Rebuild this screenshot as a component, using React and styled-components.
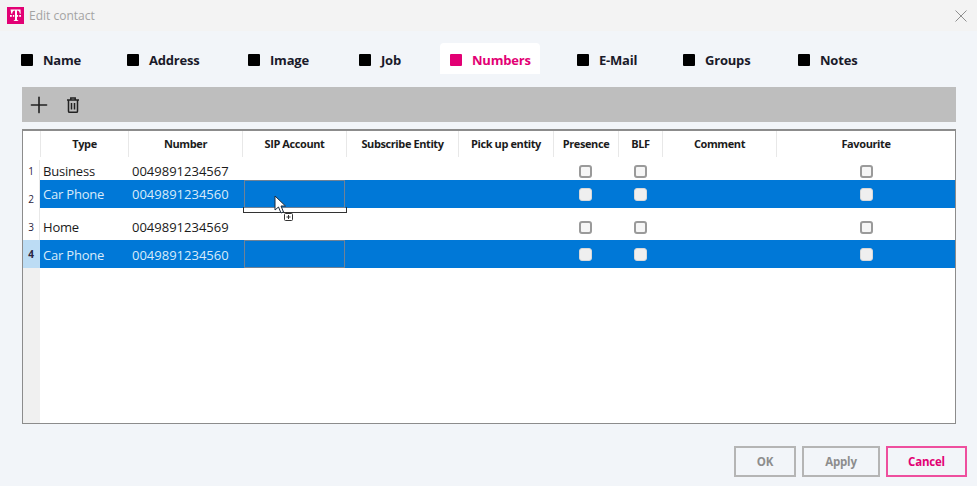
import React from 'react';
import styled, { createGlobalStyle } from 'styled-components';
import { Plus } from 'lucide-react';

const MAGENTA = '#e20074';
const COLUMNS = '17px 88px 114px 104px 112px 95px 65px 44px 114px 1fr';
const HEADER_COLUMNS = '18px 88px 114px 104px 112px 95px 65px 44px 114px 1fr';

const GlobalStyle = createGlobalStyle`
  html, body { margin: 0; padding: 0; }
  body { background: #f2f5f9; font-family: "Open Sans", "Noto Sans", sans-serif; }
`;

const Dialog = styled.div`
  width: 977px;
  height: 486px;
  display: flex;
  flex-direction: column;
  overflow: hidden;
  background: #f2f5f9;
`;

const TitleBar = styled.div`
  height: 31px;
  flex: none;
  display: flex;
  align-items: center;
  padding: 0 9px 0 7px;
  background: #f3f3f3;
`;

const Logo = styled.div`
  width: 17px;
  height: 17px;
  background: ${MAGENTA};
  display: flex;
`;

const TitleText = styled.span`
  margin-left: 5px;
  font-size: 12px;
  color: #a3a3a3;
`;

const CloseButton = styled.div`
  margin-left: auto;
  display: flex;
`;

const Tabs = styled.div`
  display: flex;
  height: 31px;
  margin-top: 12px;
  padding-left: 21px;
  flex: none;
`;

const Tab = styled.div`
  width: ${p => p.$w}px;
  display: flex;
  align-items: center;
  gap: 10px;
  padding: 3px 0 0 ${p => p.$pl || 0}px;
  box-sizing: border-box;
  font-size: 13px;
  font-weight: 700;
  letter-spacing: -0.2px;
  color: ${p => (p.$active ? MAGENTA : '#1a1a2a')};
  background: ${p => (p.$active ? '#fff' : 'transparent')};
  border-radius: ${p => (p.$active ? '4px 4px 0 0' : '0')};
`;

const TabMark = styled.span`
  width: 12px;
  height: 12px;
  flex: none;
  border-radius: 1px;
  background: ${p => (p.$active ? MAGENTA : '#000')};
`;

const Content = styled.div`
  margin: 13px 21px 0 22px;
  display: flex;
  flex-direction: column;
  gap: 7px;
`;

const Toolbar = styled.div`
  height: 35px;
  background: #bebebe;
  display: flex;
  align-items: center;
  gap: 14px;
  padding-left: 4px;
  color: #222;
`;

const Table = styled.div`
  position: relative;
  height: 292px;
  border: 1px solid #8c8c8c;
  border-top-width: 2px;
  background: #fff;
  display: flex;
  flex-direction: column;
`;

const HeaderRow = styled.div`
  display: grid;
  grid-template-columns: ${HEADER_COLUMNS};
  height: 29px;
`;

const HeaderCell = styled.div`
  display: flex;
  align-items: center;
  justify-content: center;
  margin-bottom: 3px;
  padding-bottom: 1px;
  font-size: 11px;
  font-weight: 700;
  letter-spacing: -0.4px;
  color: #1c1c1c;
  border-right: 1px solid #e8e8e8;
  &:last-child { border-right: none; }
`;

const Row = styled.div`
  display: grid;
  grid-template-columns: ${COLUMNS};
  height: ${p => p.$h}px;
  background: ${p => (p.$selected ? '#0078d7' : '#fff')};
`;

const RowNumber = styled.div`
  display: flex;
  align-items: center;
  justify-content: center;
  padding-top: ${p => p.$top || 0}px;
  box-sizing: border-box;
  font-size: 10px;
  font-weight: ${p => (p.$current ? 700 : 400)};
  color: #2a2440;
  background: ${p => (p.$current ? '#bcdcf4' : '#fff')};
  border-right: 1px solid ${p => (p.$current ? '#bcdcf4' : '#e8e8e8')};
`;

const Cell = styled.div`
  display: flex;
  align-items: center;
  box-sizing: border-box;
  padding-left: ${p => p.$pl ?? 3}px;
  padding-top: ${p => p.$top || 0}px;
  font-size: 13px;
  letter-spacing: ${p => (p.$tight ? '-0.2px' : '0')};
  color: ${p => (p.$selected ? '#d8ebfa' : '#1a1a1a')};
`;

const FocusCell = styled.div`
  margin: 0 1px 0 2px;
  border: 1px solid #6f8296;
`;

const CheckCell = styled(Cell)`
  justify-content: center;
  padding-left: ${p => p.$pl ?? 0}px;
`;

const Check = styled.span`
  width: ${p => (p.$selected ? 11 : 9)}px;
  height: ${p => (p.$selected ? 11 : 9)}px;
  border: ${p => (p.$selected ? '1px solid #d8d8d8' : '2px solid #9a9a9a')};
  border-radius: 3px;
  background: ${p => (p.$selected ? '#efefef' : '#f6f6f6')};
`;

const Gutter = styled.div`
  flex: 1;
  width: 17px;
  background: #f0f0f0;
`;

const DragGhost = styled.div`
  position: absolute;
  left: 220px;
  top: 76px;
  width: 104px;
  height: 6px;
  border: 1px solid #333;
  border-top: none;
  box-sizing: border-box;
`;

const DragPlus = styled.div`
  position: absolute;
  left: 261px;
  top: 82px;
  display: flex;
`;

const Cursor = styled.div`
  position: absolute;
  left: 251px;
  top: 64px;
  display: flex;
`;

const Footer = styled.div`
  display: flex;
  justify-content: flex-end;
  gap: 6px;
  margin-top: 22px;
  padding-right: 10px;
`;

const Button = styled.div`
  width: ${p => p.$w}px;
  height: 31px;
  box-sizing: border-box;
  display: flex;
  align-items: center;
  justify-content: center;
  font-size: 11.5px;
  font-weight: 700;
  letter-spacing: -0.2px;
  background: #f2f5f9;
  color: ${p => (p.$primary ? MAGENTA : '#8d8d8d')};
  border: 2px solid ${p => (p.$primary ? '#ee4f9e' : '#b5b5b5')};
`;

const tabs = [
  { label: 'Name', w: 106 },
  { label: 'Address', w: 121 },
  { label: 'Image', w: 111 },
  { label: 'Job', w: 81 },
  { label: 'Numbers', w: 100, pl: 10, active: true },
  { label: 'E-Mail', w: 143, pl: 37 },
  { label: 'Groups', w: 115 },
  { label: 'Notes', w: 100 },
];

const headers = ['Type', 'Number', 'SIP Account', 'Subscribe Entity', 'Pick up entity', 'Presence', 'BLF', 'Comment', 'Favourite'];

const rows = [
  { n: 1, type: 'Business', number: '0049891234567', h: 20, top: 2, numTop: 2 },
  { n: 2, type: 'Car Phone', number: '0049891234560', h: 28, selected: true, focus: true, numTop: 9 },
  { n: 3, type: 'Home', number: '0049891234569', h: 32, top: 6, numTop: 6 },
  { n: 4, type: 'Car Phone', number: '0049891234560', h: 28, top: 1, selected: true, focus: true, current: true },
];

const TMark = () => (
  <svg width="17" height="17" viewBox="0 0 17 17" fill="#fff">
    <path d="M3.5 2.500h10l.2 4.300h-.9c-.1-1.900-.9-3.200-2.800-3.300v8.700c0 .8.300 1 1.200 1v.8H6.800v-.8c.9 0 1.200-.2 1.200-1V3.500c-1.900.1-2.700 1.400-2.800 3.300h-.9z" />
    <rect x="3" y="8" width="1.800" height="1.800" />
    <rect x="12.200" y="8" width="1.800" height="1.800" />
    <rect x="5.900" y="8" width="1.300" height="1.800" />
    <rect x="9.800" y="8" width="1.300" height="1.800" />
  </svg>
);

const TrashIcon = () => (
  <svg width="14" height="18" viewBox="0 0 14 18" fill="none" stroke="#222" strokeWidth="1.500">
    <path d="M1 4h12M4.800 4V2h4.400v2M2.500 4v11.200c0 .7.400 1.100 1.100 1.100h6.800c.7 0 1.100-.4 1.100-1.100V4M5.500 7v6.500M8.500 7v6.500" />
  </svg>
);

export default function App() {
  return (
    <Dialog>
      <GlobalStyle />
      <TitleBar>
        <Logo><TMark /></Logo>
        <TitleText>Edit contact</TitleText>
        <CloseButton>
          <svg width="14" height="14" viewBox="0 0 14 14" stroke="#8f8f8f" strokeWidth="1" fill="none">
            <path d="M1.500 1.500l11 11M12.500 1.500l-11 11" />
          </svg>
        </CloseButton>
      </TitleBar>

      <Tabs>
        {tabs.map(t => (
          <Tab key={t.label} $w={t.w} $pl={t.pl} $active={t.active}>
            <TabMark $active={t.active} />
            {t.label}
          </Tab>
        ))}
      </Tabs>

      <Content>
        <Toolbar>
          <Plus size={26} strokeWidth={1.500} />
          <TrashIcon />
        </Toolbar>

        <Table>
          <HeaderRow>
            <HeaderCell />
            {headers.map(h => <HeaderCell key={h}>{h}</HeaderCell>)}
          </HeaderRow>

          {rows.map(r => (
            <Row key={r.n} $h={r.h} $selected={r.selected}>
              <RowNumber $current={r.current} $top={r.numTop}>{r.n}</RowNumber>
              <Cell $selected={r.selected} $top={r.top} $tight>{r.type}</Cell>
              <Cell $selected={r.selected} $top={r.top} $pl={4}>{r.number}</Cell>
              {r.focus ? <FocusCell /> : <Cell />}
              <Cell />
              <Cell />
              <CheckCell $top={r.top}><Check $selected={r.selected} /></CheckCell>
              <CheckCell $top={r.top}><Check $selected={r.selected} /></CheckCell>
              <Cell />
              <CheckCell $top={r.top} $pl={2}><Check $selected={r.selected} /></CheckCell>
            </Row>
          ))}
          <Gutter />

          <DragGhost />
          <DragPlus>
            <svg width="9" height="8" viewBox="0 0 9 8" fill="#fff" stroke="#333" strokeWidth="1">
              <rect x="0.500" y="0.500" width="8" height="7" rx="1" />
              <path d="M2.500 4h4M4.500 2v4" fill="none" />
            </svg>
          </DragPlus>
          <Cursor>
            <svg width="13" height="19" viewBox="0 0 13 19">
              <path d="M1 1v14l3.500-3 2.500 6 2.500-1-2.500-6h4.500z" fill="#fff" stroke="#1c2a3a" strokeWidth="1" strokeLinejoin="round" />
            </svg>
          </Cursor>
        </Table>
      </Content>

      <Footer>
        <Button $w={62}>OK</Button>
        <Button $w={78}>Apply</Button>
        <Button $w={81} $primary>Cancel</Button>
      </Footer>
    </Dialog>
  );
}
